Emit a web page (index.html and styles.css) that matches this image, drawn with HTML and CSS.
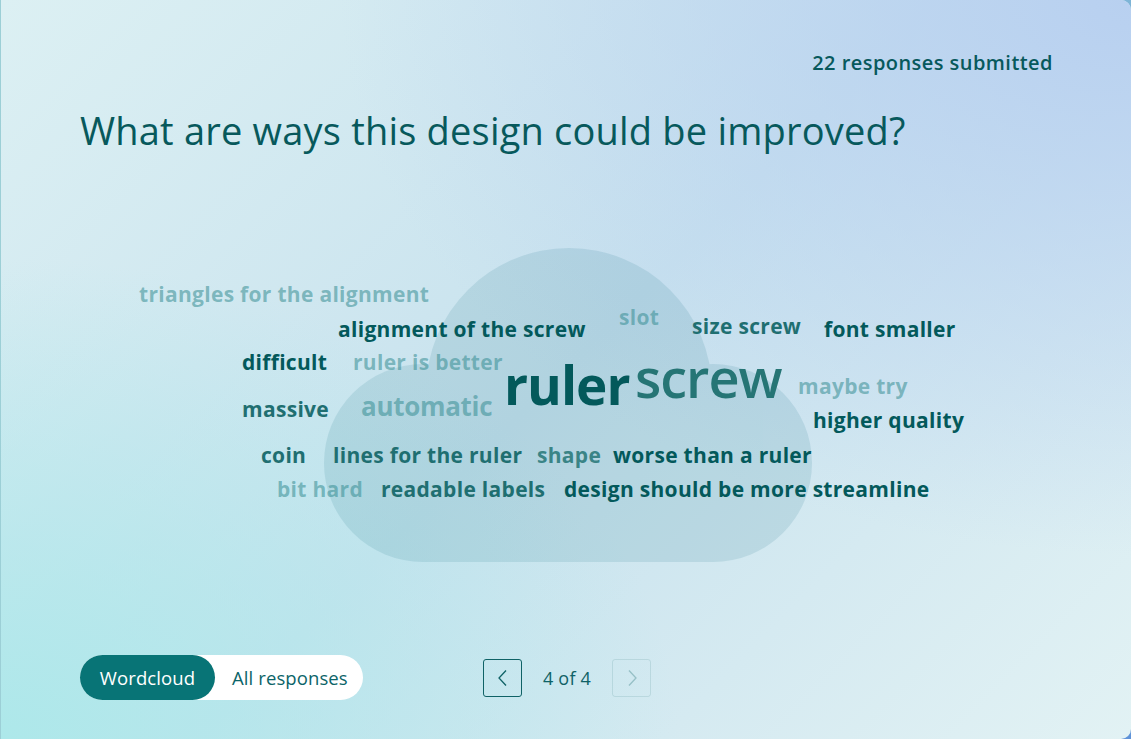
FILE: index.html
```html
<!DOCTYPE html>
<html lang="en">
<head>
<meta charset="utf-8">
<title>Wordcloud</title>
<link rel="stylesheet" href="styles.css">
</head>
<body>
<main class="card">
  <div class="counter">22 responses submitted</div>
  <h1 class="question">What are ways this design could be improved?</h1>
  <section class="cloud-area">
    <svg class="cloud-shape" width="489" height="315" viewBox="323 248 489 315" aria-hidden="true">
      <g fill="#146e82" opacity="0.12">
        <circle cx="568" cy="391" r="143"/>
        <circle cx="422" cy="463" r="99"/>
        <circle cx="712" cy="463" r="99"/>
        <rect x="422" y="463" width="290" height="99"/>
      </g>
    </svg>
    <span class="word s20 c3" style="left:59px;top:130px">triangles for the alignment</span>
    <span class="word s20 c1" style="left:258px;top:165px">alignment of the screw</span>
    <span class="word s20 c3" style="left:539px;top:153px">slot</span>
    <span class="word s20 c2" style="left:612px;top:162px">size screw</span>
    <span class="word s20 c1" style="left:744px;top:165px">font smaller</span>
    <span class="word s20 c1" style="left:162px;top:198px">difficult</span>
    <span class="word s20 c3" style="left:273px;top:198px">ruler is better</span>
    <span class="word s56 c1" style="left:424px;top:204px">ruler</span>
    <span class="word s58 c2b" style="left:555px;top:196px">screw</span>
    <span class="word s20 c3" style="left:718px;top:222px">maybe try</span>
    <span class="word s20 c2" style="left:162px;top:245px">massive</span>
    <span class="word s26 c3" style="left:281px;top:239px">automatic</span>
    <span class="word s20 c1" style="left:733px;top:256px">higher quality</span>
    <span class="word s20 c2" style="left:181px;top:291px">coin</span>
    <span class="word s20 c2" style="left:253px;top:291px">lines for the ruler</span>
    <span class="word s20 c2c" style="left:457px;top:291px">shape</span>
    <span class="word s20 c1" style="left:533px;top:291px">worse than a ruler</span>
    <span class="word s20 c3" style="left:197px;top:325px">bit hard</span>
    <span class="word s20 c2" style="left:301px;top:325px">readable labels</span>
    <span class="word s20 c1" style="left:484px;top:325px">design should be more streamline</span>
  </section>
  <footer class="controls">
    <div class="view-toggle">
      <button class="toggle-btn active">Wordcloud</button>
      <button class="toggle-btn">All responses</button>
    </div>
    <nav class="pager">
      <button class="page-btn" aria-label="Previous">
        <svg width="12" height="18" viewBox="0 0 12 18"><polyline points="9,1.5 2,9 9,16.5" fill="none" stroke="currentColor" stroke-width="1.3"/></svg>
      </button>
      <span class="page-label">4 of 4</span>
      <button class="page-btn disabled" aria-label="Next">
        <svg width="12" height="18" viewBox="0 0 12 18"><polyline points="3,1.5 10,9 3,16.5" fill="none" stroke="currentColor" stroke-width="1.3"/></svg>
      </button>
    </nav>
  </footer>
</main>
</body>
</html>
```

FILE: styles.css
```css
* { box-sizing: border-box; }
html, body { margin: 0; padding: 0; }
body {
  width: 1131px;
  height: 739px;
  overflow: hidden;
  background: linear-gradient(160deg, #8fc7d6 0%, #5f93d8 100%);
  font-family: "Open Sans", "Noto Sans", sans-serif;
  color: #07595c;
}
.card {
  width: 1131px;
  height: 739px;
  border-radius: 0 10px 10px 0;
  border-left: 1px solid #9ccfd6;
  padding: 50px 78px 0 79px;
  display: flex;
  flex-direction: column;
  background:
    radial-gradient(ellipse 70% 75% at 100% 0%, #b8d0f0 0%, rgba(184,208,240,0) 100%),
    radial-gradient(ellipse 60% 65% at 0% 100%, #ade8ea 0%, rgba(173,232,234,0) 100%),
    linear-gradient(135deg, #dcf0f3 0%, #c8e2ee 50%, #e2f2f4 100%);
}
.counter {
  text-align: right;
  font-size: 20px;
  font-weight: 600;
  line-height: 26px;
  letter-spacing: 0.45px;
}
.question {
  margin: 30px 0 0;
  font-size: 38px;
  font-weight: 400;
  line-height: 48px;
  letter-spacing: 0.2px;
}
.cloud-area {
  position: relative;
  height: 501px;
  flex: none;
}
.cloud-shape {
  position: absolute;
  left: 244px;
  top: 94px;
}
.word {
  position: absolute;
  white-space: nowrap;
  font-weight: 700;
  line-height: 1;
}
.s20 { font-size: 21px; letter-spacing: 0.3px; }
.s26 { font-size: 26px; letter-spacing: -0.3px; }
.s56 { font-size: 53px; letter-spacing: -1px; }
.s58 { font-size: 54px; font-weight: 600; letter-spacing: -1px; }
.c1 { color: #03595b; }
.c2 { color: #1f6f71; }
.c2b { color: #267575; }
.c2c { color: #3a8486; }
.c3 { color: rgba(52,140,145,0.55); }

.controls {
  display: flex;
  align-items: center;
  height: 45px;
}
.view-toggle {
  display: flex;
  background: #ffffff;
  border-radius: 23px;
  height: 45px;
  width: 283px;
  flex: none;
}
.toggle-btn {
  border: none;
  background: transparent;
  font-family: inherit;
  font-size: 18.5px;
  color: #0b6468;
  padding: 0 0 0 17px;
  border-radius: 23px;
  height: 45px;
  letter-spacing: 0.1px;
  white-space: nowrap;
  flex: none;
  cursor: pointer;
}
.toggle-btn.active {
  background: #087476;
  color: #ffffff;
  width: 135px;
  padding: 0;
}
.pager {
  display: flex;
  align-items: center;
  margin-left: 120px;
}
.page-btn {
  width: 39px;
  height: 38px;
  border: 1px solid #0f6266;
  border-radius: 3px;
  background: transparent;
  color: #0f6266;
  display: flex;
  align-items: center;
  justify-content: center;
  padding: 0;
}
.page-btn.disabled {
  border-color: rgba(15,98,102,0.12);
  color: rgba(15,98,102,0.3);
}
.page-label {
  font-size: 18px;
  color: #0f6266;
  width: 90px;
  text-align: center;
  letter-spacing: 0.2px;
}
```
